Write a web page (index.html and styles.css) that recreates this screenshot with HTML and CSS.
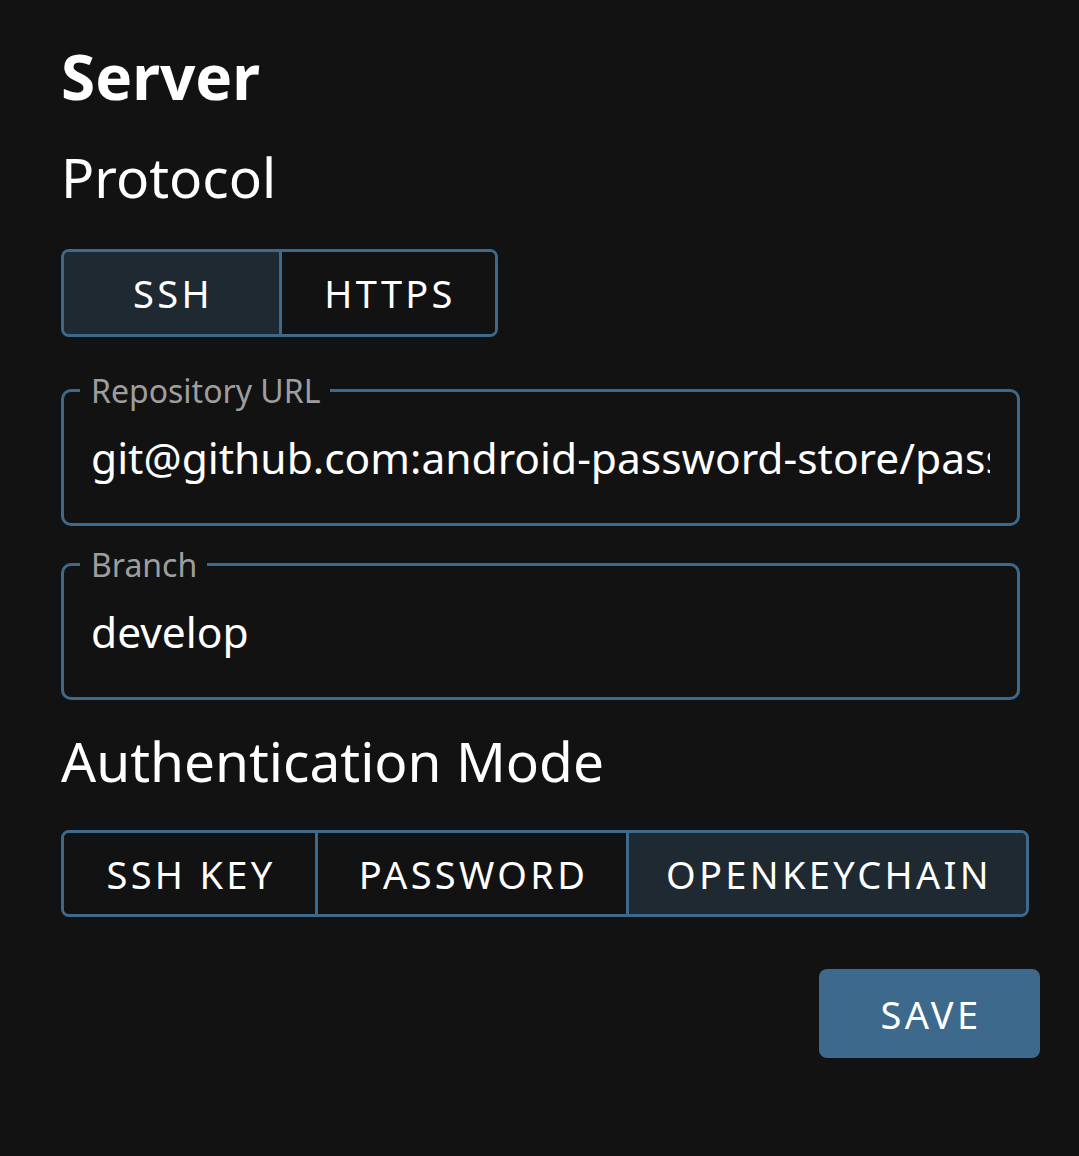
FILE: index.html
```html
<!DOCTYPE html>
<html>
<head>
<meta charset="utf-8">
<link rel="stylesheet" href="styles.css">
</head>
<body>
<main class="page">
  <h1 class="title">Server</h1>
  <h2 class="section">Protocol</h2>
  <div class="seg seg-protocol">
    <div class="seg-btn selected">SSH</div>
    <div class="seg-btn">HTTPS</div>
  </div>
  <div class="field field-url">
    <span class="field-label">Repository URL</span>
    <span class="field-value">git@github.com:android-password-store/pass-test</span>
  </div>
  <div class="field field-branch">
    <span class="field-label">Branch</span>
    <span class="field-value">develop</span>
  </div>
  <h2 class="section section-auth">Authentication Mode</h2>
  <div class="seg seg-auth">
    <div class="seg-btn seg-sshkey">SSH KEY</div>
    <div class="seg-btn seg-password">PASSWORD</div>
    <div class="seg-btn seg-okc selected">OPENKEYCHAIN</div>
  </div>
  <div class="actions">
    <div class="save">SAVE</div>
  </div>
</main>
</body>
</html>
```

FILE: styles.css
```css
html, body {
  margin: 0;
  padding: 0;
  background: #121212;
}
body {
  font-family: "Noto Sans", "Open Sans", sans-serif;
  color: #ffffff;
  width: 1079px;
  height: 1156px;
  overflow: hidden;
}
.page {
  padding: 34px 0 0 61px;
  display: flex;
  flex-direction: column;
  align-items: flex-start;
}
.title {
  margin: 0;
  font-size: 62px;
  font-weight: 700;
  line-height: normal;
}
.section {
  margin: 21px 0 0 0;
  font-size: 55px;
  font-weight: 400;
  line-height: normal;
}
.seg {
  display: flex;
  border: 3px solid #3d6a8c;
  border-radius: 8px;
  overflow: hidden;
  box-sizing: border-box;
  height: 88px;
}
.seg-protocol {
  margin-top: 35px;
}
.seg-btn {
  display: flex;
  align-items: center;
  justify-content: center;
  font-size: 38px;
  letter-spacing: 3.3px;
  padding: 0 0 0 3px;
  box-sizing: border-box;
  background: #121212;
}
.seg-btn + .seg-btn {
  border-left: 3px solid #3d6a8c;
}
.seg-btn.selected {
  background: #1e2932;
}
.seg-protocol .seg-btn {
  width: 216px;
}
.seg-protocol .seg-btn:first-child {
  width: 215px;
}
.seg-sshkey {
  width: 251px;
}
.seg-password {
  width: 311px;
}
.seg-okc {
  width: 400px;
}
.field {
  position: relative;
  box-sizing: border-box;
  width: 959px;
  height: 137px;
  border: 3px solid #3d6a8c;
  border-radius: 10px;
  padding-left: 27px;
  padding-right: 27px;
  display: flex;
  align-items: center;
}
.field-url {
  margin-top: 52px;
}
.field-branch {
  margin-top: 37px;
}
.field-label {
  position: absolute;
  left: 16px;
  top: -17px;
  padding: 0 10px 0 11px;
  background: #121212;
  color: #9e9e9e;
  font-size: 32px;
  line-height: 32px;
}
.field-value {
  font-size: 42.5px;
  white-space: nowrap;
  overflow: hidden;
  width: 100%;
}
.section-auth {
  margin-top: 23px;
}
.seg-auth {
  margin-top: 32px;
  height: 87px;
}
.actions {
  align-self: stretch;
  display: flex;
  justify-content: flex-end;
  padding-right: 39px;
  margin-top: 52px;
}
.save {
  width: 221px;
  height: 89px;
  border-radius: 8px;
  background: #3d6a8c;
  display: flex;
  align-items: center;
  justify-content: center;
  font-size: 38px;
  letter-spacing: 3.4px;
  padding-left: 3px;
  box-sizing: border-box;
}
```
